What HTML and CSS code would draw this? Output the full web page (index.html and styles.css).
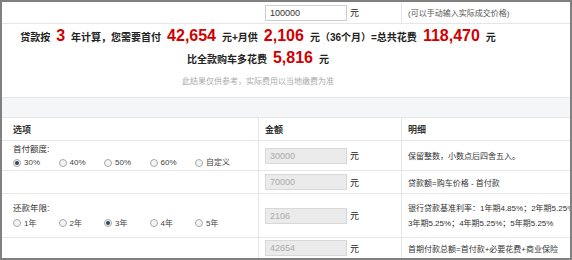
FILE: index.html
```html
<!DOCTYPE html>
<html lang="zh-CN">
<head>
  <meta charset="UTF-8" />
  <meta name="viewport" content="width=device-width, initial-scale=1.0" />
  <title>购车贷款计算</title>
  <link rel="stylesheet" href="styles.css">
</head>
<body>
  <div class="calc">
    <div class="row row-price">
      <div class="cell c1"></div>
      <div class="cell c2 no-line"><input class="num" id="price" value="100000" /><span class="unit">元</span></div>
      <div class="cell c3 note">(可以手动输入实际成交价格)</div>
    </div>

    <div class="summary">
      <p class="sum-line">贷款按<b class="red">3</b>年计算，您需要首付<b class="red">42,654</b>元+月供<b class="red">2,106</b>元（36个月）=总共花费<b class="red">118,470</b>元</p>
      <p class="sum-line">比全款购车多花费<b class="red">5,816</b>元</p>
      <p class="sum-tip">此结果仅供参考，实际费用以当地缴费为准</p>
    </div>

    <div class="band"></div>

    <div class="row row-head">
      <div class="cell c1">选项</div>
      <div class="cell c2">金额</div>
      <div class="cell c3">明细</div>
    </div>

    <div class="row row-down">
      <div class="cell c1 stack">
        <div class="label">首付额度:</div>
        <div class="opts">
          <span class="opt"><i class="radio on"></i>30%</span>
          <span class="opt"><i class="radio"></i>40%</span>
          <span class="opt"><i class="radio"></i>50%</span>
          <span class="opt"><i class="radio"></i>60%</span>
          <span class="opt"><i class="radio"></i>自定义</span>
        </div>
      </div>
      <div class="cell c2"><input class="num" value="30000" disabled /><span class="unit">元</span></div>
      <div class="cell c3">保留整数，小数点后四舍五入。</div>
    </div>

    <div class="row row-loan">
      <div class="cell c1"></div>
      <div class="cell c2"><input class="num" value="70000" disabled /><span class="unit">元</span></div>
      <div class="cell c3">贷款额=购车价格 - 首付款</div>
    </div>

    <div class="row row-years">
      <div class="cell c1 stack">
        <div class="label">还款年限:</div>
        <div class="opts">
          <span class="opt"><i class="radio"></i>1年</span>
          <span class="opt"><i class="radio"></i>2年</span>
          <span class="opt"><i class="radio on"></i>3年</span>
          <span class="opt"><i class="radio"></i>4年</span>
          <span class="opt"><i class="radio"></i>5年</span>
        </div>
      </div>
      <div class="cell c2"><input class="num" value="2106" disabled /><span class="unit">元</span></div>
      <div class="cell c3 stack rate">
        <div>银行贷款基准利率：1年期4.85%；2年期5.25%；</div>
        <div>3年期5.25%；4年期5.25%；5年期5.25%</div>
      </div>
    </div>

    <div class="row row-first">
      <div class="cell c1"></div>
      <div class="cell c2"><input class="num" value="42654" disabled /><span class="unit">元</span></div>
      <div class="cell c3">首期付款总额=首付款+必要花费+商业保险</div>
    </div>
  </div>
</body>
</html>
```

FILE: styles.css
```css
* { box-sizing: border-box; }
body { margin: 0; background: #fff; color: #333; font-family: "Liberation Sans", "Noto Sans CJK SC", sans-serif; }
p { margin: 0; }

.calc { width: 572px; height: 260px; border: 2px solid #808080; overflow: hidden; }

.row { display: grid; grid-template-columns: 256px 143px 240px; border-bottom: 1px solid #e6e6e6; }
.cell { display: flex; align-items: center; padding: 0 6px; font-size: 8px; white-space: nowrap; }
.cell + .cell { border-left: 1px solid #e6e6e6; }
.cell + .no-line { border-left-color: transparent; }
.c1 { padding-left: 11px; }
.stack { flex-direction: column; align-items: flex-start; justify-content: center; line-height: 14px; }

.row-price { height: 22px; }
.row-head { height: 23px; font-weight: bold; font-size: 9px; }
.row-head .cell { font-size: 9px; }
.row-down { height: 30px; }
.row-loan { height: 23px; }
.row-years { height: 44px; }
.row-years .stack { line-height: 15px; }
.row-first { height: 20px; border-bottom: 0; }

.note { color: #555; }

.num { width: 82px; height: 16px; margin: 0; padding: 0 4px; border: 1px solid #cfcfcf; background: #fff; color: #333; font: 9px "Liberation Sans", sans-serif; }
.num:disabled { background: #ebebeb; border-color: #d8d8d8; color: #aaa; }
.unit { margin-left: 3px; font-size: 9px; color: #222; }

.summary { height: 74px; padding: 3px 56px 0 0; border-bottom: 1px solid #e6e6e6; text-align: center; }
.sum-line { font-size: 10px; font-weight: bold; line-height: 22px; color: #222; }
.red { margin: 0 6px; font-size: 16px; line-height: 1; color: #d10000; font-family: "Liberation Sans", sans-serif; }
.sum-tip { font-size: 8px; line-height: 22px; color: #aaa; }

.band { height: 20px; background: #f5f6f8; border-bottom: 1px solid #e6e6e6; }

.label { font-size: 8.5px; }
.opts { display: flex; font-size: 8px; color: #444; }
.opt { display: flex; align-items: center; width: 45.5px; }
.radio { display: inline-block; width: 8px; height: 8px; margin-right: 3px; border: 1px solid #a8a8a8; border-radius: 50%; background: #f4f4f4; position: relative; }
.radio.on::after { content: ""; position: absolute; left: 1px; top: 1px; width: 4px; height: 4px; border-radius: 50%; background: #2e4660; }
```
